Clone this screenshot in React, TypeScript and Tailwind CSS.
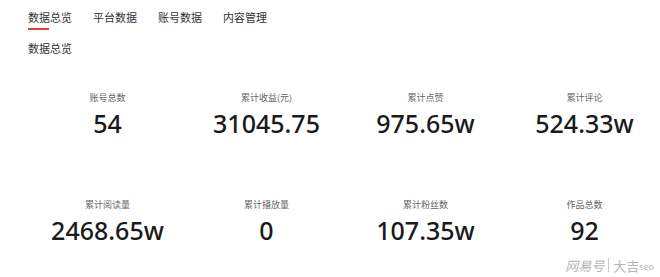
import React from 'react';

const TABS = ['数据总览', '平台数据', '账号数据', '内容管理'];

const STATS = [
    { label: '账号总数', value: '54' },
    { label: '累计收益(元)', value: '31045.75' },
    { label: '累计点赞', value: '975.65w' },
    { label: '累计评论', value: '524.33w' },
    { label: '累计阅读量', value: '2468.65w' },
    { label: '累计播放量', value: '0' },
    { label: '累计粉丝数', value: '107.35w' },
    { label: '作品总数', value: '92' },
];

export default function App() {
    return (
        <div
            className="relative w-[660px] h-[277px] overflow-hidden bg-white text-[#333]"
            style={{ fontFamily: '"Noto Sans CJK SC", "Noto Sans", sans-serif' }}
        >
            {/* Tabs */}
            <div className="flex gap-[21px] pl-[28px] pt-[7px]">
                {TABS.map((tab, i) => (
                    <div key={tab} className="flex flex-col items-start">
                        <span className="text-[11px] leading-[20px] text-[#333]">{tab}</span>
                        <span
                            className={`mt-[1px] h-[2px] w-[21px] ${i === 0 ? 'bg-[#e0403a]' : 'bg-transparent'}`}
                        />
                    </div>
                ))}
            </div>

            {/* Section title */}
            <div className="pl-[28px] pt-[8px] text-[11px] leading-[20px] text-[#333]">数据总览</div>

            {/* Stats */}
            <div className="grid grid-cols-4 w-[664px] pl-[28px] pt-[33px] gap-y-[59px]">
                {STATS.map((s) => (
                    <div key={s.label} className="flex flex-col items-center">
                        <span className="text-[9px] leading-[14px] text-[#666]">{s.label}</span>
                        <span
                            className="mt-[2px] text-[25px] leading-[32px] font-medium text-[#1a1a1a]"
                            style={{ fontFamily: '"Noto Sans", sans-serif' }}
                        >
                            {s.value}
                        </span>
                    </div>
                ))}
            </div>

            {/* Watermark */}
            <div className="absolute right-[6px] bottom-[2px] flex items-center text-[13px] text-[#b5b5b5]">
                <span className="italic">网易号</span>
                <span className="mx-[4px] h-[14px] w-px bg-[#c8c8c8]" />
                <span>大吉</span>
                <span className="text-[9px] mt-[3px]">seo</span>
            </div>
        </div>
    );
}
